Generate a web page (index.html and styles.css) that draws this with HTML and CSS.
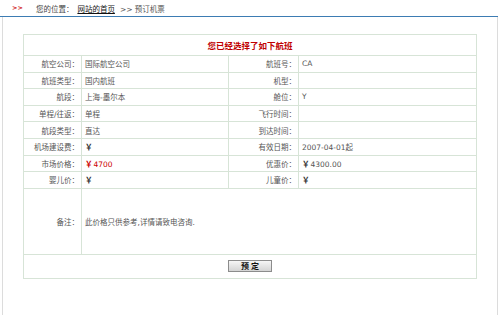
FILE: index.html
```html
<!DOCTYPE html>
<html lang="zh-CN">
<head>
<meta charset="utf-8">
<title>预订机票</title>
<link rel="stylesheet" href="styles.css">
</head>
<body>
<div class="crumb">
  <span class="arrows">&gt;&gt;</span>
  <span class="here">您的位置：</span>
  <a class="home" href="#">网站的首页</a>
  <span class="cur">&gt;&gt; 预订机票</span>
</div>
<div class="rule"></div>
<div class="panel">
  <table class="info">
    <colgroup>
      <col class="c1"><col class="c2"><col class="c3"><col class="c4">
    </colgroup>
    <tr class="title"><td colspan="4">您已经选择了如下航班</td></tr>
    <tr><th>航空公司：</th><td>国际航空公司</td><th>航班号：</th><td>CA</td></tr>
    <tr><th>航班类型：</th><td>国内航班</td><th>机型：</th><td></td></tr>
    <tr><th>航段：</th><td>上海-墨尔本</td><th>舱位：</th><td>Y</td></tr>
    <tr><th>单程/往返：</th><td>单程</td><th>飞行时间：</th><td></td></tr>
    <tr><th>航段类型：</th><td>直达</td><th>到达时间：</th><td></td></tr>
    <tr><th>机场建设费：</th><td><b class="yen">￥</b></td><th>有效日期：</th><td>2007-04-01起</td></tr>
    <tr><th>市场价格：</th><td class="red"><b class="yen">￥</b>4700</td><th>优惠价：</th><td><b class="yen">￥</b>4300.00</td></tr>
    <tr><th>婴儿价：</th><td><b class="yen">￥</b></td><th>儿童价：</th><td><b class="yen">￥</b></td></tr>
    <tr class="note"><th>备注：</th><td colspan="3">此价格只供参考,详情请致电咨询.</td></tr>
    <tr class="act"><td colspan="4"><button class="btn" type="button">预 定</button></td></tr>
  </table>
</div>
</body>
</html>
```
FILE: styles.css
```css
html, body {
  margin: 0;
  padding: 0;
  background: #fff;
}
body {
  font-family: "DejaVu Sans", "Noto Sans CJK SC", sans-serif;
  font-size: 7.5px;
  color: #555;
}
.crumb {
  height: 16px;
  display: flex;
  align-items: center;
  padding-left: 12px;
  color: #444;
}
.arrows {
  color: #d02020;
  font-weight: bold;
  font-size: 6.5px;
  margin-right: 13px;
}
.home {
  color: #111;
  margin: 0 5px 0 4px;
  text-decoration: underline;
}
.cur {
  color: #555;
}
.rule {
  height: 1px;
  background: #3d7cb3;
  margin-right: 2px;
}
.panel {
  margin: 0 2px;
  border-left: 1px solid #dcdcdc;
  border-right: 1px solid #dcdcdc;
  padding: 17px 20px 40px 20px;
}
.info {
  width: 454px;
  border-collapse: collapse;
  border: 1px solid #cfd6cf;
  table-layout: fixed;
}
.c1 { width: 58px; }
.c2 { width: 147px; }
.c3 { width: 70px; }
.c4 { width: 178px; }
.info th, .info td {
  border: 1px solid #d7e4d7;
  height: 15.6px;
  padding: 0;
  font-weight: normal;
  white-space: nowrap;
}
.info th {
  text-align: right;
  padding-right: 2px;
  color: #555;
}
.info td {
  text-align: left;
  padding-left: 3px;
}
.info .title td {
  height: 20px;
  text-align: center;
  color: #c00000;
  font-weight: bold;
  font-size: 8.5px;
  padding: 0;
}
.yen {
  color: #333;
  margin-right: 1px;
}
.red, .red .yen {
  color: #c00;
}
.info .note th, .info .note td {
  height: 65px;
}
.info .act td {
  height: 23px;
  text-align: center;
  padding: 0;
}
.btn {
  width: 44px;
  height: 12px;
  padding: 0;
  border: 1px solid #8c8c8c;
  background: linear-gradient(#f6f6f6, #d4d4d4);
  font-family: "Noto Sans CJK SC", sans-serif;
  font-size: 8px;
  font-weight: bold;
  color: #111;
  line-height: 10px;
  margin-top: 0;
}
```
